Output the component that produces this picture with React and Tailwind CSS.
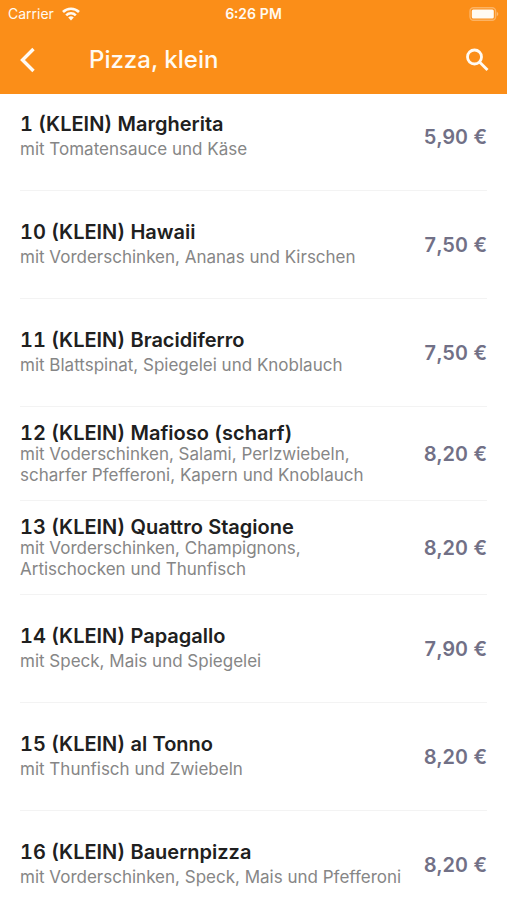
import React from "react";

const pizzas = [
  { name: "1 (KLEIN) Margherita", info: ["mit Tomatensauce und Käse"], price: "5,90 €" },
  { name: "10 (KLEIN) Hawaii", info: ["mit Vorderschinken, Ananas und Kirschen"], price: "7,50 €" },
  { name: "11 (KLEIN) Bracidiferro", info: ["mit Blattspinat, Spiegelei und Knoblauch"], price: "7,50 €" },
  {
    name: "12 (KLEIN) Mafioso (scharf)",
    info: ["mit Voderschinken, Salami, Perlzwiebeln,", "scharfer Pfefferoni, Kapern und Knoblauch"],
    price: "8,20 €",
  },
  {
    name: "13 (KLEIN) Quattro Stagione",
    info: ["mit Vorderschinken, Champignons,", "Artischocken und Thunfisch"],
    price: "8,20 €",
  },
  { name: "14 (KLEIN) Papagallo", info: ["mit Speck, Mais und Spiegelei"], price: "7,90 €" },
  { name: "15 (KLEIN) al Tonno", info: ["mit Thunfisch und Zwiebeln"], price: "8,20 €" },
  { name: "16 (KLEIN) Bauernpizza", info: ["mit Vorderschinken, Speck, Mais und Pfefferoni"], price: "8,20 €" },
];

function StatusBar() {
  return (
    <div className="grid h-7 grid-cols-3 items-center px-2 text-sm">
      <div className="flex items-center gap-2">
        <span>Carrier</span>
        <svg width="18" height="14" viewBox="0 0 18 14" fill="none" stroke="currentColor" strokeWidth="2.6">
          <path d="M1 5a11.300 11.300 0 0 1 16 0" />
          <path d="M4.200 8.300a6.800 6.800 0 0 1 9.600 0" />
          <path d="M9 13.400 6.200 10.500a4 4 0 0 1 5.600 0z" fill="currentColor" stroke="none" />
        </svg>
      </div>
      <span className="text-center font-semibold whitespace-nowrap tabular-nums">6:26 PM</span>
      <svg className="justify-self-end" width="30" height="14" viewBox="0 0 30 14" fill="none">
        <rect x="1" y="0.700" width="25.600" height="12.600" rx="3.500" stroke="currentColor" strokeOpacity="0.35" strokeWidth="1.4" />
        <rect x="2.800" y="2.500" width="22" height="9" rx="1.500" fill="currentColor" />
        <path d="M27.800 4.800c2 .8 2 3.600 0 4.400z" fill="currentColor" fillOpacity="0.4" />
      </svg>
    </div>
  );
}

function PizzaRow({ name, info, price }) {
  const isLong = info.length > 1;

  return (
    <li
      className={`flex items-center justify-between border-b border-[#f3f3f3] ${
        isLong ? "min-h-[94px]" : "min-h-[108px]"
      }`}
    >
      <div className={`flex flex-col ${isLong ? "gap-0" : "gap-1"}`}>
        <h2 className="text-xl leading-[22px] font-semibold text-[#202020] tabular-nums">{name}</h2>
        <p className="text-[17px] leading-[21px] text-[#868686]">
          {info.map((line) => (
            <span key={line} className="block">
              {line}
            </span>
          ))}
        </p>
      </div>
      <span className="shrink-0 text-xl font-semibold text-[#717086] tabular-nums">{price}</span>
    </li>
  );
}

export default function App() {
  return (
    <div className="h-screen overflow-hidden bg-white font-['Inter',sans-serif]">
      <header className="relative z-10 bg-[#fb8e18] text-[#fffaf2]">
        <StatusBar />
        <div className="flex h-[66px] items-center px-4 pb-0.5">
          <button type="button" aria-label="Zurück" className="w-[73px]">
            <svg width="24" height="26" viewBox="0 0 24 26" fill="none" stroke="currentColor" strokeWidth="3.4">
              <path d="M17.500 2 6.500 13l11 11" />
            </svg>
          </button>
          <h1 className="flex-1 text-2xl font-medium">Pizza, klein</h1>
          <button type="button" aria-label="Suchen">
            <svg width="28" height="28" viewBox="0 0 28 28" fill="none" stroke="currentColor" strokeWidth="2.8">
              <circle cx="11.500" cy="11" r="7" />
              <path d="m16.500 16 8 8" />
            </svg>
          </button>
        </div>
      </header>
      {/* the list slides slightly under the header */}
      <ul className="-mt-[11px] px-5">
        {pizzas.map((pizza) => (
          <PizzaRow key={pizza.name} {...pizza} />
        ))}
      </ul>
    </div>
  );
}
